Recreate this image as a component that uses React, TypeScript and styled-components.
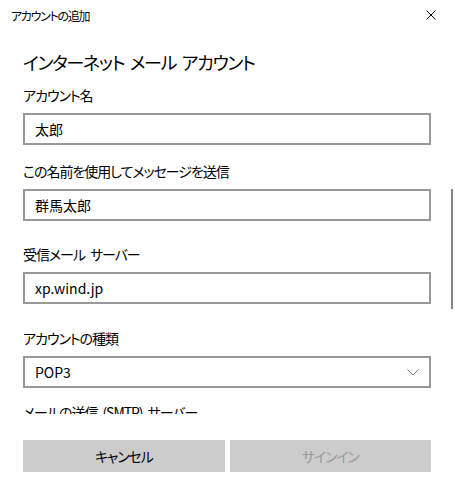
import React from "react";
import styled, { createGlobalStyle } from "styled-components";

const Global = createGlobalStyle`
  html, body { margin: 0; padding: 0; background: #fff; }
  body {
    font-family: "Noto Sans CJK JP", "Noto Sans", sans-serif;
    font-feature-settings: "palt";
    color: #000;
  }
`;

const Window = styled.div`
  width: 455px;
  height: 485px;
  display: flex;
  flex-direction: column;
  background: #fff;
  overflow: hidden;
`;

const TitleBar = styled.div`
  height: 30px;
  display: flex;
  align-items: center;
  justify-content: space-between;
  padding: 0 19px 0 11px;
  font-size: 12px;
  letter-spacing: -1.3px;
  flex: none;
`;

const CloseButton = styled.div`
  width: 10px;
  height: 10px;
  display: flex;
`;

const ScrollArea = styled.div`
  position: relative;
  height: 384px;
  overflow: hidden;
  padding: 0 24px 0 23px;
  flex: none;
`;

const ScrollThumb = styled.div`
  position: absolute;
  right: 2px;
  top: 159px;
  width: 2px;
  height: 120px;
  background: #858585;
`;

const Heading = styled.h1`
  margin: 18px 0 0;
  font-size: 18px;
  font-weight: 400;
  line-height: 28px;
  letter-spacing: -1.35px;
  word-spacing: 3px;
`;

const Fields = styled.div`
  margin-top: 9px;
  display: flex;
  flex-direction: column;
`;

const Field = styled.div<{ $after: number }>`
  display: flex;
  flex-direction: column;
  gap: 8px;
  margin-bottom: ${(p) => p.$after}px;
`;

const Label = styled.div`
  font-size: 14px;
  line-height: 20px;
  letter-spacing: -1.05px;
  word-spacing: 3px;
  white-space: nowrap;
`;

const Box = styled.div`
  box-sizing: border-box;
  height: 32px;
  border: 2px solid #999;
  display: flex;
  align-items: center;
  justify-content: space-between;
  padding: 0 10px 0 10px;
  font-size: 14px;
`;

const Footer = styled.div`
  display: flex;
  gap: 5px;
  padding: 26px 24px 0 23px;
`;

const Button = styled.div<{ $disabled?: boolean }>`
  flex: 1;
  height: 32px;
  background: #ccc;
  display: flex;
  align-items: center;
  justify-content: center;
  font-size: 14px;
  letter-spacing: -1.2px;
  color: ${(p) => (p.$disabled ? "#9a9a9a" : "#000")};
`;

const fields = [
  { label: "アカウント名", value: "太郎", after: 16 },
  { label: "この名前を使用してメッセージを送信", value: "群馬太郎", after: 23 },
  { label: "受信メール サーバー", value: "xp.wind.jp", after: 24 },
  { label: "アカウントの種類", value: "POP3", after: 14, select: true },
];

export default function App() {
  return (
    <Window>
      <Global />
      <TitleBar>
        <span>アカウントの追加</span>
        <CloseButton>
          <svg width="10" height="10" viewBox="0 0 10 10">
            <path d="M0.5 0.5 L9.5 9.5 M9.5 0.5 L0.5 9.5" stroke="#000" strokeWidth="1" />
          </svg>
        </CloseButton>
      </TitleBar>
      <ScrollArea>
        <Heading>インターネット メール アカウント</Heading>
        <Fields>
          {fields.map((f) => (
            <Field key={f.label} $after={f.after}>
              <Label>{f.label}</Label>
              <Box>
                <span>{f.value}</span>
                {f.select && (
                  <svg width="12" height="7" viewBox="0 0 12 7">
                    <path d="M0.5 0.5 L6 6 L11.5 0.5" stroke="#777" strokeWidth="1" fill="none" />
                  </svg>
                )}
              </Box>
            </Field>
          ))}
          <Label>メールの送信 (SMTP) サーバー</Label>
        </Fields>
        <ScrollThumb />
      </ScrollArea>
      <Footer>
        <Button>キャンセル</Button>
        <Button $disabled>サインイン</Button>
      </Footer>
    </Window>
  );
}
